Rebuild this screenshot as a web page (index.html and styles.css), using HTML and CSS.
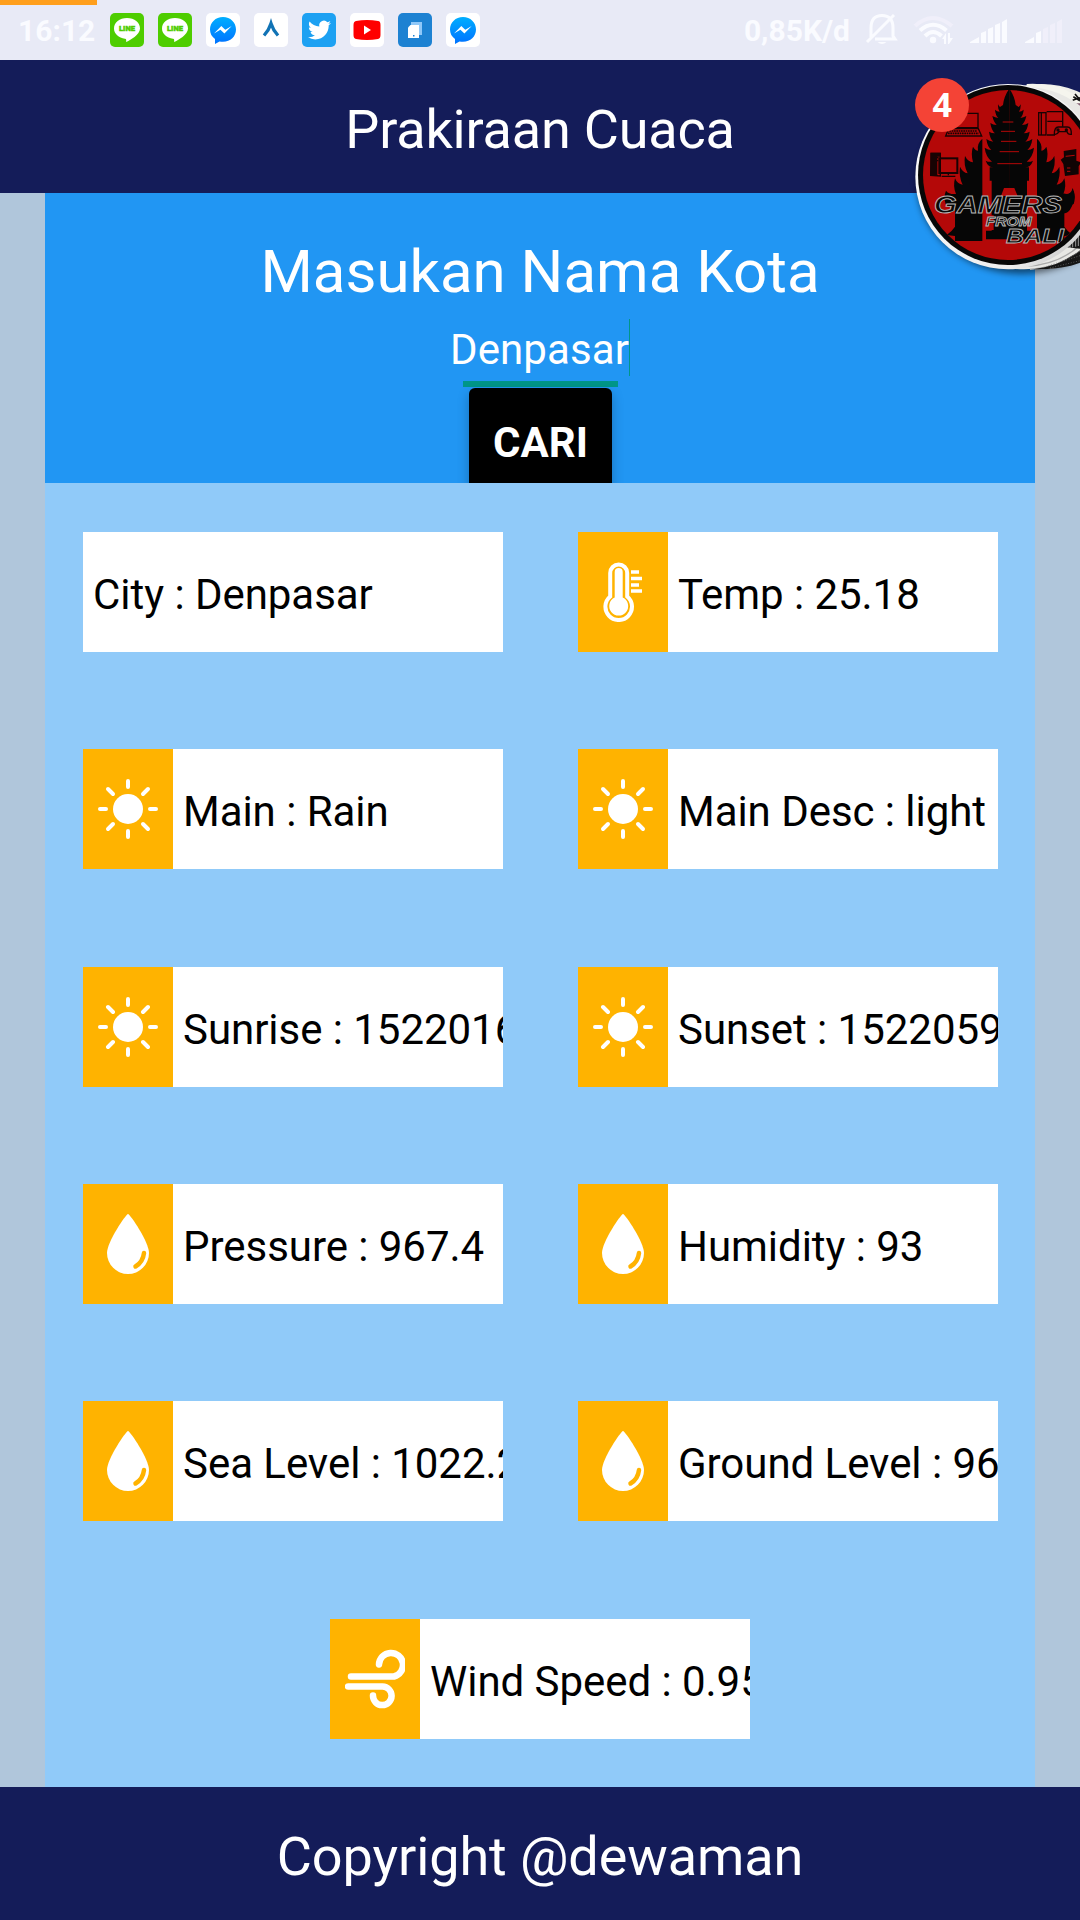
FILE: index.html
```html
<!DOCTYPE html>
<html lang="id">
<head>
<meta charset="utf-8">
<title>Prakiraan Cuaca</title>
<link rel="stylesheet" href="styles.css">
</head>
<body>
<svg class="defs" aria-hidden="true">
  <defs>
    <linearGradient id="chat" x1="0" y1="0" x2="0" y2="1"><stop offset="0" stop-color="#00aeff"/><stop offset="1" stop-color="#0072ff"/></linearGradient>
    <symbol id="line" viewBox="0 0 34 34">
      <rect width="34" height="34" rx="5" fill="#4ecd00"/>
      <path d="M17 5C9.500 5 4 9.600 4 15.500c0 5.200 4.700 9.300 11 10.200 1.500.3 1.300 1 1.100 3.300 4-1.800 13.900-7.300 13.900-13.500C30 9.600 24.500 5 17 5z" fill="#fff"/>
      <text x="17" y="18" class="line-word" text-anchor="middle" textLength="16" lengthAdjust="spacingAndGlyphs">LINE</text>
    </symbol>
    <symbol id="messenger" viewBox="0 0 34 34">
      <rect width="34" height="34" rx="5" fill="#fff"/>
      <path d="M17 4C9.500 4 4 9.500 4 16.500c0 4 1.800 7.200 5 9.500v5l4.500-2.600c1.100.3 2.300.4 3.500.4 7.500 0 13-5.300 13-12.300S24.500 4 17 4z" fill="url(#chat)"/>
      <path d="M8 20.500l7.300-7.500 4 3.700 6.400-3.700-7.300 7.500-4-3.700z" fill="#fff"/>
    </symbol>
    <symbol id="sun" viewBox="0 0 60 60">
      <circle cx="30" cy="30" r="15" fill="#fff"/>
      <path d="M30 2v6M30 52v6M2 30h6M52 30h6M10 10l5 5M45 45l5 5M50 10l-5 5M15 45l-5 5" stroke="#fff" stroke-width="4" stroke-linecap="round"/>
    </symbol>
    <symbol id="drop" viewBox="0 0 60 60">
      <path d="M30 0C28 0 9 28 9 39a21 21 0 0 0 42 0C51 28 32 0 30 0z" fill="#fff"/>
      <path d="M46 39q-1 9-8.500 13.500" fill="none" stroke="#ffb300" stroke-width="4.500" stroke-linecap="round"/>
    </symbol>
    <symbol id="temp" viewBox="0 0 60 60">
      <path d="M17.200 34.500V11a8.500 8.500 0 0 1 17 0v23.500a13.300 13.300 0 1 1-17 0z" fill="none" stroke="#fff" stroke-width="4"/>
      <path d="M21.700 10a4 4 0 0 1 8 0v25.500a9.500 9.500 0 1 1-8 0z" fill="#fff"/>
      <path d="M38 10h8M38 16.500h11M38 23h8M38 29h11" stroke="#fff" stroke-width="3.600"/>
    </symbol>
    <symbol id="wind" viewBox="0 0 60 60">
      <path d="M6 27.500h43a12 12 0 1 0-15-12M3 37.500h34.500a9.300 9.300 0 1 1-9.500 9" fill="none" stroke="#fff" stroke-width="6.500" stroke-linecap="round"/>
    </symbol>
  </defs>
</svg>

<div class="screen">
  <div class="status">
    <div class="progress"></div>
    <span class="clock">16:12</span>
    <div class="apps">
      <svg><use href="#line"/></svg>
      <svg><use href="#line"/></svg>
      <svg><use href="#messenger"/></svg>
      <svg viewBox="0 0 34 34"><rect width="34" height="34" rx="5" fill="#fff"/><path d="M10 22.500Q15 17 17 10.500Q19 17 24 22.500" fill="none" stroke="#1173b5" stroke-width="3.300"/></svg>
      <svg viewBox="0 0 34 34"><rect width="34" height="34" rx="5" fill="#1da1f2"/><path transform="translate(6 5.500) scale(.96)" fill="#fff" d="M23.950 4.570a10 10 0 0 1-2.820.77 4.960 4.960 0 0 0 2.160-2.720c-.95.550-2 .950-3.120 1.180a4.920 4.920 0 0 0-8.380 4.480C7.690 8.090 4.070 6.130 1.640 3.160a4.820 4.820 0 0 0-.67 2.470c0 1.710.87 3.210 2.190 4.100a4.900 4.900 0 0 1-2.230-.62v.06a4.920 4.920 0 0 0 3.950 4.830 4.990 4.990 0 0 1-2.210.08 4.940 4.940 0 0 0 4.600 3.420A9.870 9.870 0 0 1 0 19.540a13.990 13.990 0 0 0 7.550 2.210c9.050 0 14-7.500 14-13.980 0-.21 0-.42-.02-.63a9.940 9.940 0 0 0 2.460-2.550z"/></svg>
      <svg viewBox="0 0 34 34"><rect width="34" height="34" rx="5" fill="#fff"/><path d="M6 8Q17 6 28 8Q30.500 8 30.500 12V22Q30.500 25.500 28 26Q17 28 6 26Q3.500 25.500 3.500 22V12Q3.500 8.500 6 8z" fill="red"/><path d="M14 12.500l7 4.500-7 4.500z" fill="#fff"/></svg>
      <svg viewBox="0 0 34 34"><rect width="34" height="34" rx="5" fill="#1d82d2"/><rect x="13" y="9" width="11" height="13" fill="#90c8f8"/><path d="M12.500 12H21v13H10V14.500z" fill="#fff"/><rect x="15" y="22" width="1.500" height="1.500" fill="#1d82d2"/></svg>
      <svg><use href="#messenger"/></svg>
    </div>
    <div class="system">
      <span class="speed">0,85K/d</span>
      <svg class="signals" viewBox="0 0 200 34">
        <g fill="none" stroke="#fafbff" stroke-width="3">
          <path d="M8 24V15Q8 2.500 19 2.500t11 12.500v8l2 3H12M4 29L31 2"/>
          <path d="M14.500 29q4.500 4 9 0z" fill="#fafbff" stroke="none"/>
        </g>
        <path d="M52 13Q69.500-3 89 13" fill="none" stroke="#f0effa" stroke-width="4"/>
        <path d="M57 17.500Q70 6 83.500 17.500M62 23Q70 15 78.500 23" fill="none" stroke="#fafbff" stroke-width="4"/>
        <circle cx="70" cy="27" r="3.200" fill="#fafbff"/>
        <path d="M79 26l4-6v11h-2v-5zM85 31V20h2v5h3l-4 6z" fill="#fafbff"/>
        <path d="M107 30v-1l9-5v6zM118 30V20l5-2v12zM125 30V16l5-2v16zM132 30V12l5-2v20zM139 30V9l5-3v24z" fill="#fafbff"/>
        <path d="M162 30v-1l9-5v6zM173 30V20l5-2v12z" fill="#fafbff"/>
        <path d="M180 30V16l5-2v16zM187 30V12l5-2v20zM194 30V9l5-3v24z" fill="#f0effa"/>
      </svg>
    </div>
  </div>

  <header class="bar title">Prakiraan Cuaca</header>

  <main class="content">
    <section class="search">
      <h1>Masukan Nama Kota</h1>
      <div class="field"><span class="value">Denpasar</span></div>
      <button class="go" type="button">CARI</button>
    </section>
    <section class="grid">
      <div class="card"><span>City : Denpasar</span></div>
      <div class="card"><i><svg><use href="#temp"/></svg></i><span>Temp : 25.18</span></div>
      <div class="card"><i><svg><use href="#sun"/></svg></i><span>Main : Rain</span></div>
      <div class="card"><i><svg><use href="#sun"/></svg></i><span>Main Desc : light</span></div>
      <div class="card"><i><svg><use href="#sun"/></svg></i><span>Sunrise : 1522016</span></div>
      <div class="card"><i><svg><use href="#sun"/></svg></i><span>Sunset : 1522059</span></div>
      <div class="card"><i><svg><use href="#drop"/></svg></i><span>Pressure : 967.4</span></div>
      <div class="card"><i><svg><use href="#drop"/></svg></i><span>Humidity : 93</span></div>
      <div class="card"><i><svg><use href="#drop"/></svg></i><span>Sea Level : 1022.2</span></div>
      <div class="card"><i><svg><use href="#drop"/></svg></i><span>Ground Level : 96</span></div>
      <div class="card wide"><i><svg><use href="#wind"/></svg></i><span>Wind Speed : 0.95</span></div>
    </section>
  </main>

  <footer class="bar">Copyright @dewaman</footer>

  <!-- Floating chat head with unread badge -->
  <svg class="chat-head" viewBox="0 0 540 690">
    <defs>
      <filter id="soft" x="-20%" y="-20%" width="140%" height="140%"><feGaussianBlur stdDeviation="9"/></filter>
      <clipPath id="disc"><circle cx="324" cy="345" r="255"/></clipPath>
      <linearGradient id="rim" x1="0" y1="0" x2="1" y2="1"><stop offset="0" stop-color="#fff"/><stop offset=".75" stop-color="#eee"/><stop offset="1" stop-color="#aaa"/></linearGradient>
    </defs>
    <ellipse cx="365" cy="366" rx="315" ry="276" fill="#000" opacity=".5" filter="url(#soft)"/>
    <circle cx="424" cy="350" r="278" fill="#f0f0ea"/>
    <circle cx="424" cy="350" r="262" fill="#171717"/>
    <path d="M425 88q70 3 115 48v50q-50-55-115-98z" fill="#a47b82"/>
    <path d="M432 104q55 12 108 72v-46q-22-22-40-28z" fill="#886477"/>
    <path d="M380 72q88-4 140 30l20 16v12h-24q-50-42-136-48z" fill="#f5f5ee"/>
    <path d="M520 110l20 12M518 121l22-8M525 102l15 18" stroke="#111" stroke-width="5"/>
    <circle cx="372" cy="354" r="274" fill="#e8e8e5"/>
    <path d="M545 570q-60 52-155 58M545 550q-60 62-165 69" fill="none" stroke="#aaa" stroke-width="4"/>
    <path d="M400 628q80-10 140-55v35q-50 20-140 20z" fill="#151515"/>
    <path d="M430 622l110-35M450 624l90-22" stroke="#777" stroke-width="2" stroke-dasharray="3 5"/>
    <path d="M500 562q24-22 40-48v52z" fill="#161616"/>
    <path d="M510 547v17M518 540v22M527 530v30M535 520v38" stroke="#ddd" stroke-width="2"/>
    <circle cx="324" cy="350" r="278" fill="url(#rim)"/>
    <circle cx="324" cy="345" r="270" fill="#070707"/>
    <circle cx="324" cy="345" r="255" fill="#b40808"/>
    <g clip-path="url(#disc)">
      <g fill="#060606">
        <path id="half" d="M328 86Q312 108 309 135L300 141Q296 138 294 133Q293 146 299 155Q291 155 285 149Q286 165 295 174Q285 173 277 168Q281 186 290 195Q279 195 271 189Q274 211 285 220Q275 220 267 215Q270 237 280 245Q267 243 259 237Q262 260 274 270Q264 270 254 263Q257 290 276 305Q266 307 257 302Q264 322 281 322H269V362H275V512H258V538H329Z"/>
        <use href="#half" transform="matrix(-1 0 0 1 656 0)"/>
        <path id="wing" d="M247 236V543H165V528L140 525Q155 515 165 500V440L137 432Q130 410 138 392Q146 404 168 402Q158 380 165 355Q172 373 188 374Q176 350 180 320Q188 338 203 340Q190 315 195 288Q204 306 219 307Q212 280 219 260Q226 272 234 272Q230 250 247 236Z"/>
        <use href="#wing" transform="matrix(-1 0 0 1 658 0)"/>
        <path d="M490 400Q512 408 518 384Q531 410 515 440Q505 462 488 460Z"/>
      </g>
      <path d="M308 186h32M303 214h42M303 244h46M299 275h58M292 311h74" stroke="#b40808" stroke-width="3"/>
      <path d="M303 408L312 384H343L353 408ZM262 466H281V510H262ZM383 466H397V500H383Z" fill="#b40808"/>
      <g fill="none" stroke="#170303" stroke-width="4">
        <path d="M155 160h79v43h-78M146 206h89l10 22H137z"/>
        <path d="M148 213h84M144 220h92" stroke-width="5" stroke-dasharray="5 2"/>
        <rect x="416" y="158" width="22" height="67"/><path d="M440 155h48v45M424 158v67M442 184h45M441 225h24"/>
        <path d="M463 223q0-22 12-22h27q13 0 12 22-10 2-13-8h-24q-6 10-14 8z"/>
        <path d="M93 280h28v68l-29-2zM97 293h18M97 302h18"/>
        <rect x="118" y="295" width="54" height="44" stroke-width="6"/><path d="M145 340v6M125 349h41"/>
      </g>
      <path d="M92 278h30v12h-10v58h-20z" fill="#170303"/>
      <circle cx="474" cy="210" r="5" fill="#170303"/><circle cx="499" cy="210" r="5" fill="#170303"/>
      <path d="M491 273l38-6v35l14 5-7 12v24l-41 5-5-36-8-13 10-7z" fill="#100404"/>
      <path d="M497 289l27-3M501 324h10M501 334h10" stroke="#b40808" stroke-width="3"/>
      <g class="emblem-text">
        <text x="102" y="459" font-size="71" textLength="384" lengthAdjust="spacingAndGlyphs">GAMERS</text>
        <text x="257" y="497" font-size="36" textLength="138" lengthAdjust="spacingAndGlyphs">FROM</text>
        <text x="318" y="548" font-size="58" textLength="174" lengthAdjust="spacingAndGlyphs">BALI</text>
      </g>
    </g>
    <circle cx="126" cy="135" r="81" fill="#f44336"/>
    <text x="127" y="171" class="badge" text-anchor="middle">4</text>
  </svg>
</div>
</body>
</html>
```

FILE: styles.css
```css
* { box-sizing: border-box; }
body {
  margin: 0;
  font-family: Roboto, "Liberation Sans", sans-serif;
  background: #b0c6db;
}
.defs { display: block; width: 0; height: 0; position: absolute; }
.screen {
  position: relative;
  width: 1080px;
  height: 1920px;
  overflow: hidden;
  display: flex;
  flex-direction: column;
  background: #b0c6db;
}

/* Status bar */
.status {
  position: relative;
  height: 60px;
  background: #e8eaf6;
  display: flex;
  align-items: center;
  padding: 0 17px 0 18px;
  color: #fafbff;
  font-size: 30px;
  font-weight: 700;
}
.progress {
  position: absolute;
  left: 0;
  top: 0;
  width: 97px;
  height: 5px;
  background: #ff9f1c;
}
.clock { width: 92px; }
.apps { display: flex; gap: 14px; }
.apps svg { width: 34px; height: 34px; display: block; }
.line-word { font: 900 6.500px Roboto, sans-serif; fill: #4ecd00; stroke: #4ecd00; stroke-width: .4px; }
.system { margin-left: auto; display: flex; align-items: center; gap: 13px; }
.signals { width: 200px; height: 34px; display: block; }

/* Title and copyright bars */
.bar {
  height: 133px;
  background: #141c59;
  color: #fff;
  font-size: 54px;
  display: flex;
  align-items: center;
  justify-content: center;
  padding-top: 6px;
  letter-spacing: -.1px;
}
.title { letter-spacing: -.2px; }

.content {
  height: 1594px;
  margin: 0 45px;
  display: flex;
  flex-direction: column;
}

/* City search */
.search {
  height: 290px;
  background: #2196f3;
  color: #fff;
  display: flex;
  flex-direction: column;
  align-items: center;
  padding-top: 44px;
  overflow: hidden;
}
.search h1 { margin: 0 0 12px; font-size: 60px; line-height: 70px; font-weight: 400; }
.field {
  width: 155px;
  height: 68px;
  border-bottom: 6px solid #009688;
  display: flex;
  justify-content: center;
  align-items: flex-start;
  flex-shrink: 0;
}
.value {
  font-size: 42px;
  line-height: 57px;
  padding-top: 2px;
  height: 57px;
  letter-spacing: .1px;
  border-right: 1px solid #009688;
}
.go {
  width: 143px;
  height: 144px;
  flex-shrink: 0;
  margin: 1px 0 0;
  padding: 30px 0 0 1px;
  border: 0;
  border-radius: 6px;
  background: #000;
  color: #fff;
  font: 700 42px/49px Roboto, sans-serif;
  text-align: center;
  display: flex;
  justify-content: center;
  align-items: flex-start;
  box-shadow: 0 5px 12px rgba(0, 0, 0, .25);
}

/* Weather readings */
.grid {
  flex: 1;
  background: #90caf9;
  display: grid;
  grid-template-columns: 1fr 1fr;
  grid-template-rows: repeat(6, 1fr);
  align-items: center;
  justify-items: center;
}
.card {
  width: 420px;
  height: 120px;
  margin: .8px 0 0 1px;
  background: #fff;
  display: flex;
  overflow: hidden;
  color: #000;
  font-size: 42px;
  line-height: 49px;
  letter-spacing: -.04px;
}
.card i {
  width: 90px;
  flex: none;
  background: #ffb300;
  display: flex;
  align-items: center;
  justify-content: center;
}
.card svg { width: 60px; height: 60px; }
.card span { padding: 38px 0 0 10px; white-space: nowrap; }
.wide { grid-column: 1 / -1; margin-left: 0; }

/* Chat head overlay */
.chat-head { position: absolute; left: 900px; top: 60px; width: 180px; height: 230px; }
.emblem-text text {
  font-family: "Liberation Sans", sans-serif;
  font-weight: 700;
  font-style: italic;
  fill: #080808;
  stroke: #b5b5b5;
  stroke-width: 2.500px;
}
.badge { font: 700 102px "Open Sans", sans-serif; fill: #fff; }
```
